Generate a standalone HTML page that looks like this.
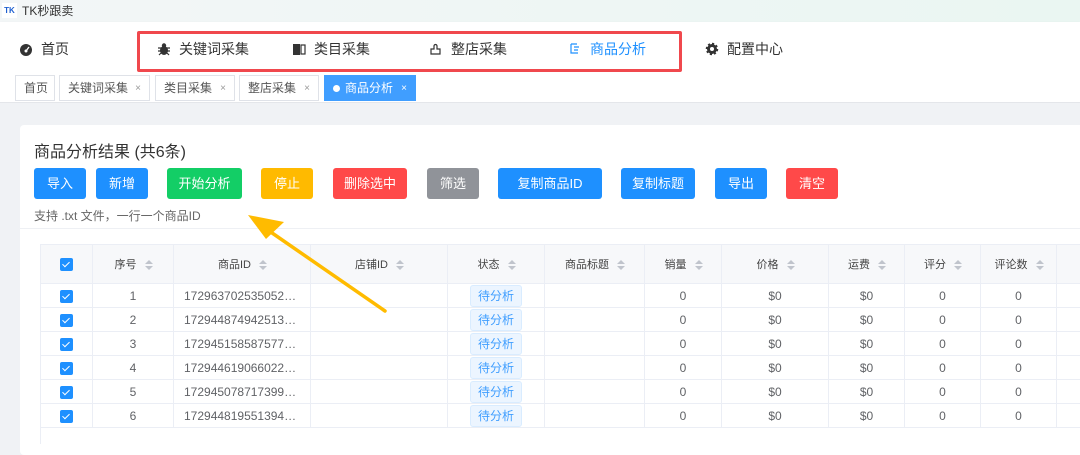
<!DOCTYPE html><html><head><meta charset="utf-8"><style>
*{box-sizing:border-box;margin:0;padding:0}
body{width:1080px;height:444px;overflow:hidden;background:#f0f2f5;font-family:"Liberation Sans","Noto Sans CJK SC",sans-serif;position:relative;color:#333}
.abs{position:absolute}
.title{left:0;top:0;width:1080px;height:22px;background:linear-gradient(90deg,#f3f6f7,#eaf6f2);font-size:12px;line-height:22px}
.nav{left:0;top:22px;width:1080px;height:50px;background:#fff;box-shadow:0 1px 3px rgba(0,0,0,.06)}
.ni{position:absolute;top:2px;line-height:50px;font-size:14px;color:#333;display:flex;align-items:center;gap:8px;height:50px}
.tags{left:0;top:72px;width:1080px;height:31px;background:#fff;border-bottom:1px solid #e4e6ea}
.tag{position:absolute;top:3px;height:26px;border:1px solid #dfe2e8;font-size:12px;line-height:25px;padding-left:8px;color:#555;background:#fff}
.tag i{font-style:normal;font-size:10px;color:#999;position:absolute;right:8px}
.card{left:20px;top:125px;width:1070px;height:330px;background:#fff;border-radius:4px}
.btn{position:absolute;top:168px;height:31px;border-radius:3px;color:#fff;font-size:13px;line-height:31px;text-align:center}
.b{background:#1e90ff}
table{position:absolute;left:40px;top:244px;border-collapse:collapse;font-size:12px;color:#606266;table-layout:fixed;width:1046px}
td,th{border:1px solid #ebeef5;text-align:center;padding:0;overflow:hidden;white-space:nowrap}
th{height:39px;background:#f7f8fa;font-weight:normal;font-size:11px;color:#444}
td{height:24px}
.s{display:inline-block;width:7px;vertical-align:middle;margin-left:8px}
.s:before{content:"";display:block;border:4px solid transparent;border-bottom:4px solid #c0c4cc;border-top:0;margin-bottom:2px}
.s:after{content:"";display:block;border:4px solid transparent;border-top:4px solid #c0c4cc;border-bottom:0}
.cb{display:inline-block;width:13px;height:13px;background:#1e90ff;border-radius:2px;position:relative;vertical-align:middle}
.cb:after{content:"";position:absolute;left:4px;top:2px;width:3px;height:6px;border:solid #fff;border-width:0 1px 1px 0;transform:rotate(45deg)}
.st{display:inline-block;background:#ecf5ff;border:1px solid #d9ecff;color:#409eff;padding:0 7px;height:22px;line-height:20px;font-size:12px;border-radius:3px}
.l{text-align:left;padding-left:10px}
</style></head><body>
<div class="abs title"><span style="position:absolute;left:2px;top:3px;width:15px;height:15px;background:#fff;font-size:8px;line-height:15px;color:#1e5fd0;font-weight:bold;text-align:center">TK</span><span style="position:absolute;left:22px">TK秒跟卖</span></div>
<div class="abs nav">
<div class="ni" style="left:19px"><svg width="14" height="14" viewBox="0 0 14 14"><circle cx="7" cy="8" r="6" fill="#333"/><circle cx="7" cy="9" r="1.5" fill="#fff"/><path d="M7 9L10 5" stroke="#fff" stroke-width="1.3"/></svg>首页</div>
<div class="ni" style="left:157px"><svg width="14" height="14" viewBox="0 0 14 14"><ellipse cx="7" cy="8.5" rx="4" ry="4.5" fill="#333"/><circle cx="7" cy="3.5" r="2.2" fill="#333"/><path d="M1 6h12M1 9h12M2 13l2-2M12 13l-2-2" stroke="#333" stroke-width="1.2"/></svg>关键词采集</div>
<div class="ni" style="left:292px"><svg width="14" height="14" viewBox="0 0 14 14"><rect x="1" y="2" width="7" height="11" fill="#333"/><rect x="9" y="3" width="4" height="9" fill="none" stroke="#333" stroke-width="1.2"/></svg>类目采集</div>
<div class="ni" style="left:429px"><svg width="14" height="14" viewBox="0 0 14 14" fill="none" stroke="#333" stroke-width="1.2"><path d="M2 7h3V4a1.5 1.5 0 013 0v3h3v5H2z"/></svg>整店采集</div>
<div class="ni" style="left:568px;color:#1e90ff"><svg width="14" height="14" viewBox="0 0 14 14" fill="none" stroke="#1e90ff" stroke-width="1.2"><path d="M3 2h6M3 2v9h7M6 5h5M6 8h4"/></svg>商品分析</div>
<div class="ni" style="left:705px"><svg width="14" height="14" viewBox="0 0 14 14"><circle cx="7" cy="7" r="5" fill="#333" stroke="#333" stroke-width="2.5" stroke-dasharray="2 1.9"/><circle cx="7" cy="7" r="2" fill="#fff"/></svg>配置中心</div>
<div style="position:absolute;left:137px;top:9px;width:545px;height:41px;border:3px solid #f0484d;border-radius:2px"></div>
</div>
<div class="abs tags">
<div class="tag" style="left:15px;width:40px">首页</div>
<div class="tag" style="left:59px;width:91px">关键词采集<i>×</i></div>
<div class="tag" style="left:155px;width:80px">类目采集<i>×</i></div>
<div class="tag" style="left:239px;width:80px">整店采集<i>×</i></div>
<div class="tag" style="left:324px;width:92px;background:#409eff;border-color:#409eff;color:#fff;padding-left:20px"><span style="position:absolute;left:8px;top:9px;width:7px;height:7px;border-radius:50%;background:#fff"></span>商品分析<i style="color:#fff">×</i></div>
</div>
<div class="abs card"></div>
<div class="abs" style="left:34px;top:138px;font-size:16px;color:#333">商品分析结果 (共6条)</div>
<div class="btn b" style="left:34px;width:52px">导入</div>
<div class="btn b" style="left:96px;width:52px">新增</div>
<div class="btn" style="left:167px;width:75px;background:#13ce66">开始分析</div>
<div class="btn" style="left:261px;width:52px;background:#ffba00">停止</div>
<div class="btn" style="left:333px;width:74px;background:#ff4949">删除选中</div>
<div class="btn" style="left:427px;width:52px;background:#909399">筛选</div>
<div class="btn b" style="left:498px;width:104px">复制商品ID</div>
<div class="btn b" style="left:621px;width:74px">复制标题</div>
<div class="btn b" style="left:715px;width:52px">导出</div>
<div class="btn" style="left:786px;width:52px;background:#ff4949">清空</div>
<div class="abs" style="left:34px;top:207px;font-size:12px;color:#666">支持 .txt 文件，一行一个商品ID</div>
<div class="abs" style="left:20px;top:228px;width:1060px;height:1px;background:#eef0f4"></div>
<table>
<colgroup><col style="width:52px"><col style="width:81px"><col style="width:137px"><col style="width:137px"><col style="width:97px"><col style="width:100px"><col style="width:77px"><col style="width:107px"><col style="width:76px"><col style="width:76px"><col style="width:76px"><col style="width:30px"></colgroup>
<tr><th><span class="cb"></span></th><th>序号<span class="s"></span></th><th>商品ID<span class="s"></span></th><th>店铺ID<span class="s"></span></th><th>状态<span class="s"></span></th><th>商品标题<span class="s"></span></th><th>销量<span class="s"></span></th><th>价格<span class="s"></span></th><th>运费<span class="s"></span></th><th>评分<span class="s"></span></th><th>评论数<span class="s"></span></th><th></th></tr>
<tr><td><span class="cb"></span></td><td>1</td><td class="l">172963702535052…</td><td></td><td><span class="st">待分析</span></td><td></td><td>0</td><td>$0</td><td>$0</td><td>0</td><td>0</td><td></td></tr>
<tr><td><span class="cb"></span></td><td>2</td><td class="l">172944874942513…</td><td></td><td><span class="st">待分析</span></td><td></td><td>0</td><td>$0</td><td>$0</td><td>0</td><td>0</td><td></td></tr>
<tr><td><span class="cb"></span></td><td>3</td><td class="l">172945158587577…</td><td></td><td><span class="st">待分析</span></td><td></td><td>0</td><td>$0</td><td>$0</td><td>0</td><td>0</td><td></td></tr>
<tr><td><span class="cb"></span></td><td>4</td><td class="l">172944619066022…</td><td></td><td><span class="st">待分析</span></td><td></td><td>0</td><td>$0</td><td>$0</td><td>0</td><td>0</td><td></td></tr>
<tr><td><span class="cb"></span></td><td>5</td><td class="l">172945078717399…</td><td></td><td><span class="st">待分析</span></td><td></td><td>0</td><td>$0</td><td>$0</td><td>0</td><td>0</td><td></td></tr>
<tr><td><span class="cb"></span></td><td>6</td><td class="l">172944819551394…</td><td></td><td><span class="st">待分析</span></td><td></td><td>0</td><td>$0</td><td>$0</td><td>0</td><td>0</td><td></td></tr>
</table>
<div class="abs" style="left:40px;top:428px;width:1040px;height:16px;border-left:1px solid #ebeef5"></div>
<svg class="abs" style="left:0;top:0" width="1080" height="444"><path d="M385 311L262 226" stroke="#ffbb00" stroke-width="3.5" stroke-linecap="round"/><path d="M248 215L284 222L266 239Z" fill="#ffbb00"/></svg>
</body></html>
